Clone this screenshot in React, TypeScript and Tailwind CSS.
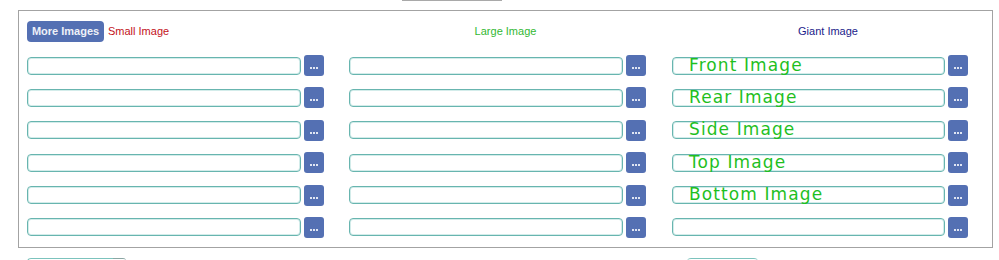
import React from "react";

const overlays: Record<number, string> = {
  0: "Front Image",
  1: "Rear Image",
  2: "Side Image",
  3: "Top Image",
  4: "Bottom Image",
};

function DotsButton() {
  return (
    <div className="w-[20px] h-[21px] rounded-[3px] bg-[#5470b3] flex items-end justify-center gap-px pb-[7px] shrink-0">
      <span className="w-[2px] h-[2px] bg-[#dfe5f3]" />
      <span className="w-[2px] h-[2px] bg-[#dfe5f3]" />
      <span className="w-[2px] h-[2px] bg-[#dfe5f3]" />
    </div>
  );
}

function Field({ width, label }: { width: string; label?: string }) {
  return (
    <div className="flex items-center gap-[3px]">
      <div className={`${width} relative h-[18px] rounded-[4px] border border-[#68b5af] bg-white shadow-[inset_0_0_0_1px_#d3ecea] shrink-0`}>
        {label ? (
          <span className="absolute left-[16px] top-[-1px] whitespace-nowrap font-['DejaVu_Sans',Verdana,sans-serif] text-[17px] leading-[17px] tracking-[1.1px] text-[#1fbf1f]">
            {label}
          </span>
        ) : null}
      </div>
      <DotsButton />
    </div>
  );
}

export default function App() {
  const rows = [0, 1, 2, 3, 4, 5];
  return (
    <div className="w-[999px] h-[260px] overflow-hidden bg-white font-['Liberation_Sans',Arial,sans-serif]">
      <div className="flex h-px">
        <div className="ml-[402px] w-[100px] h-px bg-[#a9a9a9]" />
      </div>
      <div className="mt-[9px] ml-[18px] w-[975px] h-[238px] border border-[#a3a3a3] pl-[8px] pt-[10px]">
        <div className="grid grid-cols-[322px_323px_322px] h-[21px] items-center">
          <div className="flex items-center gap-[4px]">
            <div className="h-[21px] w-[77px] rounded-[4px] bg-[#5470b3] flex items-center justify-center text-[11px] font-bold text-[#eef1f8]">
              More Images
            </div>
            <span className="text-[11px] text-[#c3121b]">Small Image</span>
          </div>
          <div className="pr-[10px] text-center text-[11px] text-[#33b833]">Large Image</div>
          <div className="pr-[10px] text-center text-[11px] text-[#1b1b8a]">Giant Image</div>
        </div>
        <div className="mt-[13px] grid grid-cols-[322px_323px_322px] gap-y-[11.4px]">
          {rows.map((r) => (
            <React.Fragment key={r}>
              <Field width="w-[274px]" />
              <Field width="w-[274px]" />
              <Field width="w-[273px]" label={overlays[r]} />
            </React.Fragment>
          ))}
        </div>
      </div>
      <div className="mt-[10px] flex">
        <div className="ml-[27px] w-[86px] h-[10px] rounded-tl-[4px] border-t border-l border-[#7cc3bd]" />
        <div className="w-[13px] h-[10px] rounded-tr-[3px] border-t border-[#8aa6a3]" />
        <div className="ml-[561px] w-[71px] h-[10px] rounded-t-[4px] border-t border-[#7cc3bd]" />
      </div>
    </div>
  );
}
